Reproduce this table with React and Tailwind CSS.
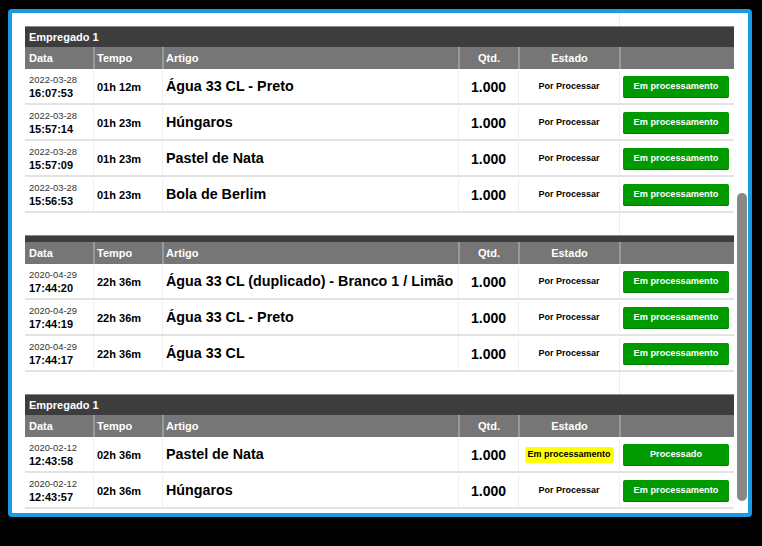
import React from "react";

const COLS = "grid grid-cols-[68px_69px_296px_60px_101px_115px]";

function GroupHeader({ name }) {
  if (!name) return <div className="h-[7px] bg-[#3d3d3d] border-t border-[#8a8a8a]" />;
  return (
    <div className="h-[21px] bg-[#3d3d3d] border-t border-[#8a8a8a] flex items-center pl-[4px] text-white font-bold text-[11px]">
      {name}
    </div>
  );
}

function ColHeader() {
  const c = "h-full flex items-center text-white font-bold text-[11px]";
  const s = "border-l-2 border-[#9a9a9a]";
  return (
    <div className={`${COLS} h-[22px] bg-[#767676]`}>
      <div className={`${c} pl-[4px]`}>Data</div>
      <div className={`${c} ${s} pl-[2px]`}>Tempo</div>
      <div className={`${c} ${s} pl-[2px]`}>Artigo</div>
      <div className={`${c} ${s} justify-center`}>Qtd.</div>
      <div className={`${c} ${s} justify-center`}>Estado</div>
      <div className={`h-full ${s}`} />
    </div>
  );
}

function Row({ date, time, tempo, artigo, estado, action }) {
  const cell = "h-full flex items-center";
  const s = "border-l border-[#efefef]";
  return (
    <div className={`${COLS} h-[36px] pt-[2px] border-b-2 border-[#e3e3e3] bg-white`}>
      <div className={`${cell} flex-col items-start justify-center pl-[4px]`}>
        <div className="text-[9.4px] leading-[11px] text-[#333]">{date}</div>
        <div className="text-[11px] leading-[14px] font-bold text-black mt-[1px]">{time}</div>
      </div>
      <div className={`${cell} ${s} pl-[3px] text-[11px] font-bold text-black`}>{tempo}</div>
      <div className={`${cell} ${s} pl-[3px] text-[14.3px] font-bold text-black whitespace-nowrap`}>{artigo}</div>
      <div className={`${cell} ${s} justify-center text-[14px] font-bold text-black`}>{"1.000"}</div>
      <div className={`${cell} ${s} justify-center`}>
        {estado === "proc" ? (
          <span className="bg-[#ffff00] rounded-[3px] w-[89px] h-[16px] flex items-center justify-center text-[9px] font-bold text-black">
            Em processamento
          </span>
        ) : (
          <span className="text-[9px] font-bold text-black">Por Processar</span>
        )}
      </div>
      <div className={`${cell} ${s} pl-[3px]`}>
        <div className="w-[106px] h-[22px] bg-[#009a00] border-b border-[#007a00] rounded-[2px] flex items-center justify-center text-white text-[9.2px] font-bold">
          {action}
        </div>
      </div>
    </div>
  );
}

function Gap({ h }) {
  return (
    <div className={`${COLS}`} style={{ height: h }}>
      <div />
      <div />
      <div />
      <div />
      <div />
      <div className="border-l border-[#ececec]" />
    </div>
  );
}

export default function App() {
  return (
    <div
      className="w-[762px] h-[546px] bg-black relative"
      style={{ fontFamily: '"Liberation Sans", Arial, sans-serif' }}
    >
      <div className="absolute left-[8px] top-[9px] w-[744px] h-[508px] border-4 border-[#1a9be2] rounded-[4px] bg-white overflow-hidden flex">
        <div className="flex-1 pl-[13px] pr-[1px] overflow-hidden">
          <div className="w-[709px]">
            <Gap h="13px" />
            <GroupHeader name="Empregado 1" />
            <ColHeader />
            <Row date="2022-03-28" time="16:07:53" tempo="01h 12m" artigo="Água 33 CL - Preto" action="Em processamento" />
            <Row date="2022-03-28" time="15:57:14" tempo="01h 23m" artigo="Húngaros" action="Em processamento" />
            <Row date="2022-03-28" time="15:57:09" tempo="01h 23m" artigo="Pastel de Nata" action="Em processamento" />
            <Row date="2022-03-28" time="15:56:53" tempo="01h 23m" artigo="Bola de Berlim" action="Em processamento" />
            <Gap h="22px" />
            <GroupHeader name="" />
            <ColHeader />
            <Row date="2020-04-29" time="17:44:20" tempo="22h 36m" artigo="Água 33 CL (duplicado) - Branco 1 / Limão" action="Em processamento" />
            <Row date="2020-04-29" time="17:44:19" tempo="22h 36m" artigo="Água 33 CL - Preto" action="Em processamento" />
            <Row date="2020-04-29" time="17:44:17" tempo="22h 36m" artigo="Água 33 CL" action="Em processamento" />
            <Gap h="22px" />
            <GroupHeader name="Empregado 1" />
            <ColHeader />
            <Row date="2020-02-12" time="12:43:58" tempo="02h 36m" artigo="Pastel de Nata" estado="proc" action="Processado" />
            <Row date="2020-02-12" time="12:43:57" tempo="02h 36m" artigo="Húngaros" action="Em processamento" />
          </div>
        </div>
        <div className="w-[12px] shrink-0 relative">
          <div className="absolute left-[1px] top-[180px] w-[10px] h-[308px] rounded-full bg-[#888888]" />
        </div>
      </div>
    </div>
  );
}
